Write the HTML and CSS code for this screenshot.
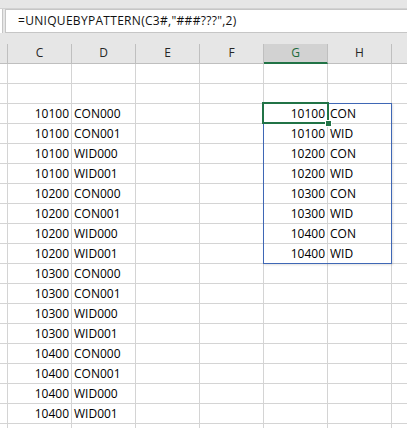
FILE: index.html
```html
<!DOCTYPE html>
<html>
<head>
<meta charset="utf-8">
<link rel="stylesheet" href="styles.css">
</head>
<body>
<div class="top"></div>
<div class="fbar">
  <div class="namebox"></div>
  <div class="formula">=UNIQUEBYPATTERN(C3#,"###???",2)</div>
</div>
<div class="gap"></div>
<div class="sheet">
  <div class="row head">
    <div class="c"></div><div class="c">C</div><div class="c">D</div><div class="c">E</div><div class="c">F</div><div class="c sel">G</div><div class="c">H</div><div class="c last"></div>
  </div>
  <div class="row"><div class="c"></div><div class="c"></div><div class="c"></div><div class="c"></div><div class="c"></div><div class="c"></div><div class="c"></div><div class="c last"></div></div>
  <div class="row"><div class="c"></div><div class="c"></div><div class="c"></div><div class="c"></div><div class="c"></div><div class="c"></div><div class="c"></div><div class="c last"></div></div>
  <div class="row"><div class="c"></div><div class="c n">10100</div><div class="c">CON000</div><div class="c"></div><div class="c"></div><div class="c n">10100</div><div class="c">CON</div><div class="c last"></div></div>
  <div class="row"><div class="c"></div><div class="c n">10100</div><div class="c">CON001</div><div class="c"></div><div class="c"></div><div class="c n">10100</div><div class="c">WID</div><div class="c last"></div></div>
  <div class="row"><div class="c"></div><div class="c n">10100</div><div class="c">WID000</div><div class="c"></div><div class="c"></div><div class="c n">10200</div><div class="c">CON</div><div class="c last"></div></div>
  <div class="row"><div class="c"></div><div class="c n">10100</div><div class="c">WID001</div><div class="c"></div><div class="c"></div><div class="c n">10200</div><div class="c">WID</div><div class="c last"></div></div>
  <div class="row"><div class="c"></div><div class="c n">10200</div><div class="c">CON000</div><div class="c"></div><div class="c"></div><div class="c n">10300</div><div class="c">CON</div><div class="c last"></div></div>
  <div class="row"><div class="c"></div><div class="c n">10200</div><div class="c">CON001</div><div class="c"></div><div class="c"></div><div class="c n">10300</div><div class="c">WID</div><div class="c last"></div></div>
  <div class="row"><div class="c"></div><div class="c n">10200</div><div class="c">WID000</div><div class="c"></div><div class="c"></div><div class="c n">10400</div><div class="c">CON</div><div class="c last"></div></div>
  <div class="row"><div class="c"></div><div class="c n">10200</div><div class="c">WID001</div><div class="c"></div><div class="c"></div><div class="c n">10400</div><div class="c">WID</div><div class="c last"></div></div>
  <div class="row"><div class="c"></div><div class="c n">10300</div><div class="c">CON000</div><div class="c"></div><div class="c"></div><div class="c"></div><div class="c"></div><div class="c last"></div></div>
  <div class="row"><div class="c"></div><div class="c n">10300</div><div class="c">CON001</div><div class="c"></div><div class="c"></div><div class="c"></div><div class="c"></div><div class="c last"></div></div>
  <div class="row"><div class="c"></div><div class="c n">10300</div><div class="c">WID000</div><div class="c"></div><div class="c"></div><div class="c"></div><div class="c"></div><div class="c last"></div></div>
  <div class="row"><div class="c"></div><div class="c n">10300</div><div class="c">WID001</div><div class="c"></div><div class="c"></div><div class="c"></div><div class="c"></div><div class="c last"></div></div>
  <div class="row"><div class="c"></div><div class="c n">10400</div><div class="c">CON000</div><div class="c"></div><div class="c"></div><div class="c"></div><div class="c"></div><div class="c last"></div></div>
  <div class="row"><div class="c"></div><div class="c n">10400</div><div class="c">CON001</div><div class="c"></div><div class="c"></div><div class="c"></div><div class="c"></div><div class="c last"></div></div>
  <div class="row"><div class="c"></div><div class="c n">10400</div><div class="c">WID000</div><div class="c"></div><div class="c"></div><div class="c"></div><div class="c"></div><div class="c last"></div></div>
  <div class="row"><div class="c"></div><div class="c n">10400</div><div class="c">WID001</div><div class="c"></div><div class="c"></div><div class="c"></div><div class="c"></div><div class="c last"></div></div>
  <div class="row"><div class="c"></div><div class="c"></div><div class="c"></div><div class="c"></div><div class="c"></div><div class="c"></div><div class="c"></div><div class="c last"></div></div>
  <div class="spill"></div>
  <div class="active"><span class="handle"></span></div>
</div>
</body>
</html>
```

FILE: styles.css
```css
html, body {
  margin: 0;
  padding: 0;
  background: #e6e6e6;
  overflow: hidden;
  font-family: "Open Sans", "Liberation Sans", sans-serif;
  font-size: 12px;
  color: #000;
}
.top {
  height: 8px;
  background: #e6e6e6;
  border-bottom: 1px solid #d2d2d2;
}
.fbar {
  display: flex;
  height: 24px;
  background: #e6e6e6;
}
.namebox {
  width: 2px;
  background: #fff;
  border-right: 1px solid #c6c6c6;
  box-sizing: content-box;
}
.formula {
  flex: 1;
  margin-left: 2px;
  background: #fff;
  border: 1px solid #c6c6c6;
  border-right: none;
  line-height: 22px;
  padding-left: 12px;
  color: #111;
  letter-spacing: 0.3px;
}
.gap {
  height: 11px;
}
.sheet {
  position: relative;
  background: #fff;
}
.row {
  display: grid;
  grid-template-columns: 8px repeat(6, 64px) 1fr;
  height: 20px;
}
.c {
  box-sizing: border-box;
  border-right: 1px solid #d4d4d4;
  border-bottom: 1px solid #d4d4d4;
  line-height: 20px;
  padding: 0 2px;
  white-space: nowrap;
  overflow: hidden;
  color: #000;
}
.c.last {
  border-right: none;
}
.c.n {
  text-align: right;
  padding-right: 2px;
}
.head {
  background: #e6e6e6;
}
.head .c {
  border-right-color: #bfbfbf;
  border-bottom-color: #bfbfbf;
  text-align: center;
  line-height: 17px;
  color: #262626;
}
.head .c.last {
  border-right: none;
}
.head .c.sel {
  background: #d2d2d2;
  border-bottom: 2px solid #217346;
  color: #1d6b3c;
  line-height: 17px;
}
.spill {
  position: absolute;
  left: 263px;
  top: 59px;
  width: 129px;
  height: 161px;
  box-sizing: border-box;
  border: 1px solid #3f67b5;
  box-shadow: 1px 1px 2px rgba(0, 0, 0, 0.12);
  pointer-events: none;
}
.active {
  position: absolute;
  left: 262px;
  top: 58px;
  width: 67px;
  height: 22px;
  box-sizing: border-box;
  border: 2px solid #217346;
}
.handle {
  position: absolute;
  right: -5px;
  bottom: -5px;
  width: 5px;
  height: 5px;
  background: #217346;
  border: 1px solid #fff;
}
```
